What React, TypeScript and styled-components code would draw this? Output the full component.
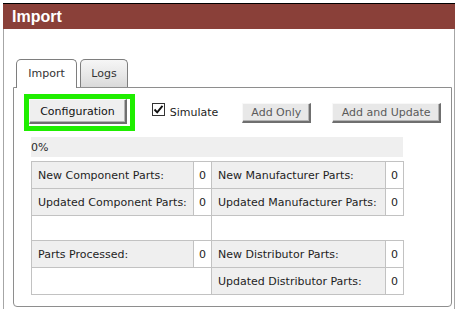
import React from "react";
import styled, { createGlobalStyle } from "styled-components";

const GlobalStyle = createGlobalStyle`
  html, body { margin: 0; padding: 0; background: #fff; overflow: hidden; }
  body {
    font-family: "DejaVu Sans", Verdana, sans-serif;
    font-size: 11px;
    color: #1e1e1e;
  }
`;

const Window = styled.div`
  margin: 3px 0 0 3px;
  width: 452px;
  border-top: 1px solid #000;
`;

const Header = styled.div`
  height: 25px;
  background: #8a4039;
  color: #fff;
  font-family: "Liberation Sans", Arial, sans-serif;
  font-weight: bold;
  font-size: 16px;
  display: flex;
  align-items: center;
  padding-left: 9px;
  box-sizing: border-box;
`;

const Body = styled.div`
  border-left: 1px solid #a6a6a6;
  border-right: 1px solid #a6a6a6;
  padding: 30px 2px 0 9px;
  min-height: 250px;
`;

const TabRow = styled.div`
  display: flex;
  align-items: flex-end;
  gap: 3px;
  padding-left: 3px;
`;

const Tab = styled.div<{ $active?: boolean; $w: number }>`
  position: relative;
  z-index: ${(p) => (p.$active ? 1 : 0)};
  width: ${(p) => p.$w}px;
  height: ${(p) => (p.$active ? 29 : 28)}px;
  margin-bottom: ${(p) => (p.$active ? -1 : 0)}px;
  box-sizing: border-box;
  border: 1px solid #7e7e7e;
  border-bottom: none;
  border-radius: 5px 5px 0 0;
  background: ${(p) =>
    p.$active ? "#fff" : "linear-gradient(#f6f6f6, #e6e6e6 60%, #d9d9d9)"};
  color: #333;
  display: flex;
  align-items: center;
  justify-content: center;
  padding-bottom: ${(p) => (p.$active ? 1 : 0)}px;
`;

const Panel = styled.div`
  border: 1px solid #8e8e8e;
  border-radius: 0 0 4px 4px;
  padding: 6px 10px 11px 10px;
`;

const Toolbar = styled.div`
  display: flex;
  align-items: center;
  height: 37px;
`;

const Highlight = styled.div`
  width: 111px;
  height: 37px;
  box-sizing: border-box;
  border: 5px solid #1fee00;
`;

const Button = styled.button<{ $w: number; $h: number; $muted?: boolean }>`
  width: ${(p) => p.$w}px;
  height: ${(p) => p.$h}px;
  box-sizing: border-box;
  margin: 0;
  padding: 0;
  font-family: "DejaVu Sans", Verdana, sans-serif;
  font-size: 11px;
  color: ${(p) => (p.$muted ? "#5a5a5a" : "#111")};
  background: ${(p) => (p.$muted ? "#e8e8e8" : "#efefef")};
  border-style: solid;
  border-width: 1px 2px 2px 1px;
  border-color: #f8f8f8 #6f6f6f #6f6f6f #f8f8f8;
  box-shadow: inset -1px -1px 0 #b4b4b4;
  display: flex;
  align-items: center;
  justify-content: center;
`;

const CheckLabel = styled.label`
  display: flex;
  align-items: center;
  margin-left: 17px;
  color: #1e1e1e;
`;

const CheckBox = styled.span`
  width: 13px;
  height: 13px;
  box-sizing: border-box;
  border: 1px solid #333;
  background: #fff;
  display: inline-flex;
  align-items: center;
  justify-content: center;
  margin-right: 5px;
  position: relative;
  top: -3px;
`;

const Spacer = styled.div<{ $w: number }>`
  width: ${(p) => p.$w}px;
  flex: none;
`;

const Content = styled.div`
  margin: 6px 0 0 7px;
  width: 372px;
`;

const Progress = styled.div`
  height: 20px;
  background: #efefef;
  display: flex;
  align-items: center;
  color: #2a2a2a;
`;

const Table = styled.table`
  margin-top: 4px;
  border-collapse: collapse;
  width: 372px;
  table-layout: fixed;
`;

const Row = styled.tr<{ $h: number }>`
  height: ${(p) => p.$h}px;
`;

const LabelCell = styled.td`
  background: #efefef;
  border: 1px solid #c2c2c2;
  padding: 0 0 0 6px;
  white-space: nowrap;
  color: #1e1e1e;
`;

const ValueCell = styled.td`
  background: #fff;
  border: 1px solid #c2c2c2;
  padding: 0;
  text-align: center;
  color: #1e1e1e;
`;

const BlankCell = styled.td<{ $open?: boolean }>`
  background: #fff;
  padding: 0;
  border: 1px solid #c2c2c2;
  ${(p) => (p.$open ? "border-right: none; border-top: none; border-bottom: none;" : "")}
`;

const Check = () => (
  <svg width="11" height="11" viewBox="0 0 11 11">
    <path d="M1.5 5.5 L4.2 8.3 L9.5 1.8" fill="none" stroke="#111" strokeWidth="1.9" />
  </svg>
);

export default function App() {
  return (
    <>
      <GlobalStyle />
      <Window>
        <Header>Import</Header>
        <Body>
          <TabRow>
            <Tab $active $w={61}>Import</Tab>
            <Tab $w={48}>Logs</Tab>
          </TabRow>
          <Panel>
            <Toolbar>
              <Highlight>
                <Button $w={98} $h={25}>Configuration</Button>
              </Highlight>
              <CheckLabel>
                <CheckBox>
                  <Check />
                </CheckBox>
                Simulate
              </CheckLabel>
              <Spacer $w={24} />
              <Button $w={69} $h={20} $muted>Add Only</Button>
              <Spacer $w={21} />
              <Button $w={109} $h={20} $muted>Add and Update</Button>
            </Toolbar>
            <Content>
              <Progress>0%</Progress>
              <Table>
                <colgroup>
                  <col style={{ width: 162 }} />
                  <col style={{ width: 18 }} />
                  <col style={{ width: 174 }} />
                  <col style={{ width: 18 }} />
                </colgroup>
                <tbody>
                  <Row $h={27}>
                    <LabelCell>New Component Parts:</LabelCell>
                    <ValueCell>0</ValueCell>
                    <LabelCell>New Manufacturer Parts:</LabelCell>
                    <ValueCell>0</ValueCell>
                  </Row>
                  <Row $h={27}>
                    <LabelCell>Updated Component Parts:</LabelCell>
                    <ValueCell>0</ValueCell>
                    <LabelCell>Updated Manufacturer Parts:</LabelCell>
                    <ValueCell>0</ValueCell>
                  </Row>
                  <Row $h={25}>
                    <BlankCell colSpan={2} />
                    <BlankCell colSpan={2} $open />
                  </Row>
                  <Row $h={27}>
                    <LabelCell>Parts Processed:</LabelCell>
                    <ValueCell>0</ValueCell>
                    <LabelCell>New Distributor Parts:</LabelCell>
                    <ValueCell>0</ValueCell>
                  </Row>
                  <Row $h={27}>
                    <BlankCell colSpan={2} />
                    <LabelCell>Updated Distributor Parts:</LabelCell>
                    <ValueCell>0</ValueCell>
                  </Row>
                </tbody>
              </Table>
            </Content>
          </Panel>
        </Body>
      </Window>
    </>
  );
}
